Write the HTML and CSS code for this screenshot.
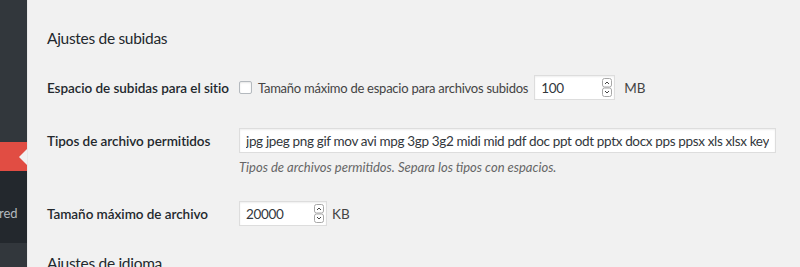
FILE: index.html
```html
<!DOCTYPE html>
<html lang="es">
<head>
<meta charset="utf-8">
<link rel="stylesheet" href="styles.css">
</head>
<body>
<div class="layout">
  <aside class="sidebar">
    <div class="menu-top"></div>
    <div class="menu-current"><span class="pointer"></span></div>
    <div class="menu-sub"><span class="sub-text">red</span></div>
    <div class="menu-bottom"></div>
  </aside>
  <main class="content">
    <h2 class="section-title">Ajustes de subidas</h2>
    <div class="form-table">
      <div class="row row-space">
        <div class="th">Espacio de subidas para el sitio</div>
        <div class="td inline">
          <span class="checkbox"></span>
          <span class="cb-label">Tamaño máximo de espacio para archivos subidos</span>
          <span class="num-field w80"><input class="field" type="text" value="100"><svg class="spin" viewBox="0 0 10 19" width="10" height="19"><rect x="0.5" y="0.5" width="9" height="8.5" rx="2" fill="#fff" stroke="#a7a7a7"/><rect x="0.5" y="10" width="9" height="8.5" rx="2" fill="#fff" stroke="#a7a7a7"/><path d="M3 6 L5 4 L7 6" fill="none" stroke="#444" stroke-width="1"/><path d="M3 13 L5 15 L7 13" fill="none" stroke="#444" stroke-width="1"/></svg></span>
          <span class="unit">MB</span>
        </div>
      </div>
      <div class="row row-types">
        <div class="th">Tipos de archivo permitidos</div>
        <div class="td">
          <input class="field wide" type="text" value="jpg jpeg png gif mov avi mpg 3gp 3g2 midi mid pdf doc ppt odt pptx docx pps ppsx xls xlsx key mp3 ogg flac m4a wav mp4 m4v webm ogv flv">
          <p class="description">Tipos de archivos permitidos. Separa los tipos con espacios.</p>
        </div>
      </div>
      <div class="row row-size">
        <div class="th">Tamaño máximo de archivo</div>
        <div class="td inline">
          <span class="num-field w88 first"><input class="field" type="text" value="20000"><svg class="spin" viewBox="0 0 10 19" width="10" height="19"><rect x="0.5" y="0.5" width="9" height="8.5" rx="2" fill="#fff" stroke="#a7a7a7"/><rect x="0.5" y="10" width="9" height="8.5" rx="2" fill="#fff" stroke="#a7a7a7"/><path d="M3 6 L5 4 L7 6" fill="none" stroke="#444" stroke-width="1"/><path d="M3 13 L5 15 L7 13" fill="none" stroke="#444" stroke-width="1"/></svg></span>
          <span class="unit">KB</span>
        </div>
      </div>
    </div>
    <h2 class="section-title next">Ajustes de idioma</h2>
  </main>
</div>
</body>
</html>
```
FILE: styles.css
```css
* { box-sizing: border-box; }
html, body { margin: 0; padding: 0; }
body {
  background: #f1f1f1;
  color: #23282d;
  font-family: Lato, "Noto Sans", sans-serif;
  font-size: 14px;
  width: 800px;
  height: 267px;
  overflow: hidden;
}
.layout { display: flex; height: 267px; }
.sidebar {
  width: 28px;
  flex: 0 0 28px;
  display: flex;
  flex-direction: column;
  border-right: 1px solid #e8e8e8;
  overflow: hidden;
}
.menu-top { height: 142px; background: #32373c; }
.menu-current {
  height: 29px;
  background: #e14d43;
  position: relative;
}
.pointer {
  position: absolute;
  right: 0;
  top: 7px;
  width: 0; height: 0;
  border-top: 8px solid transparent;
  border-bottom: 8px solid transparent;
  border-right: 8px solid #f1f1f1;
}
.menu-sub {
  height: 72px;
  background: #23282d;
  display: flex;
  align-items: center;
  padding-top: 11px;
}
.sub-text {
  color: #b4b9be;
  font-size: 13px;
  margin-left: -1px;
  white-space: nowrap;
}
.menu-bottom { flex: 1; background: #32373c; }

.content { flex: 1; padding-left: 19px; min-width: 0; }
.section-title {
  font-size: 15.5px;
  letter-spacing: -0.3px;
  font-weight: 400;
  margin: 27px 0 0;
  line-height: 22px;
  color: #23282d;
}
.section-title.next { margin-top: 12px; }
.form-table { margin-top: 12px; }
.row { display: flex; }
.th {
  width: 192px;
  flex: 0 0 192px;
  font-weight: 600;
  font-size: 13.5px;
  letter-spacing: -0.05px;
  padding: 18px 0 0;
  line-height: 18px;
  white-space: nowrap;
}
.td { padding: 14px 0; flex: 1; min-width: 0; }
.row-size .td { padding-top: 10px; }
.row-size .th { padding-top: 14px; }
.td.inline { display: flex; align-items: center; align-self: flex-start; }
.checkbox {
  width: 13px; height: 13px;
  border: 1px solid #b4b9be;
  border-radius: 2px;
  background: #fff;
  box-shadow: inset 0 1px 2px rgba(0,0,0,.1);
  margin-right: 6px;
  flex: 0 0 13px;
}
.cb-label {
  color: #444;
  white-space: nowrap;
  font-size: 13px;
  letter-spacing: -0.25px;
}
.num-field {
  position: relative;
  display: inline-block;
  margin-left: 6px;
  margin-right: 9px;
}
.num-field.first { margin-left: 0; margin-right: 5px; }
.w80 .field { width: 81px; }
.w88 .field { width: 88px; }
.field {
  display: block;
  height: 25px;
  border: 1px solid #ddd;
  background: #fff;
  box-shadow: inset 0 1px 2px rgba(0,0,0,.07);
  font-family: inherit;
  font-size: 13.5px;
  letter-spacing: -0.35px;
  color: #32373c;
  padding: 0 6px;
  margin: 0;
  outline: none;
}
.field.wide { width: 537px; }
.spin { position: absolute; right: 3px; top: 3px; }
.unit { color: #444; font-size: 13.5px; }
.description {
  margin: 4px 0 0;
  font-style: italic;
  color: #666;
  font-size: 13px;
  line-height: 20px;
}
```
